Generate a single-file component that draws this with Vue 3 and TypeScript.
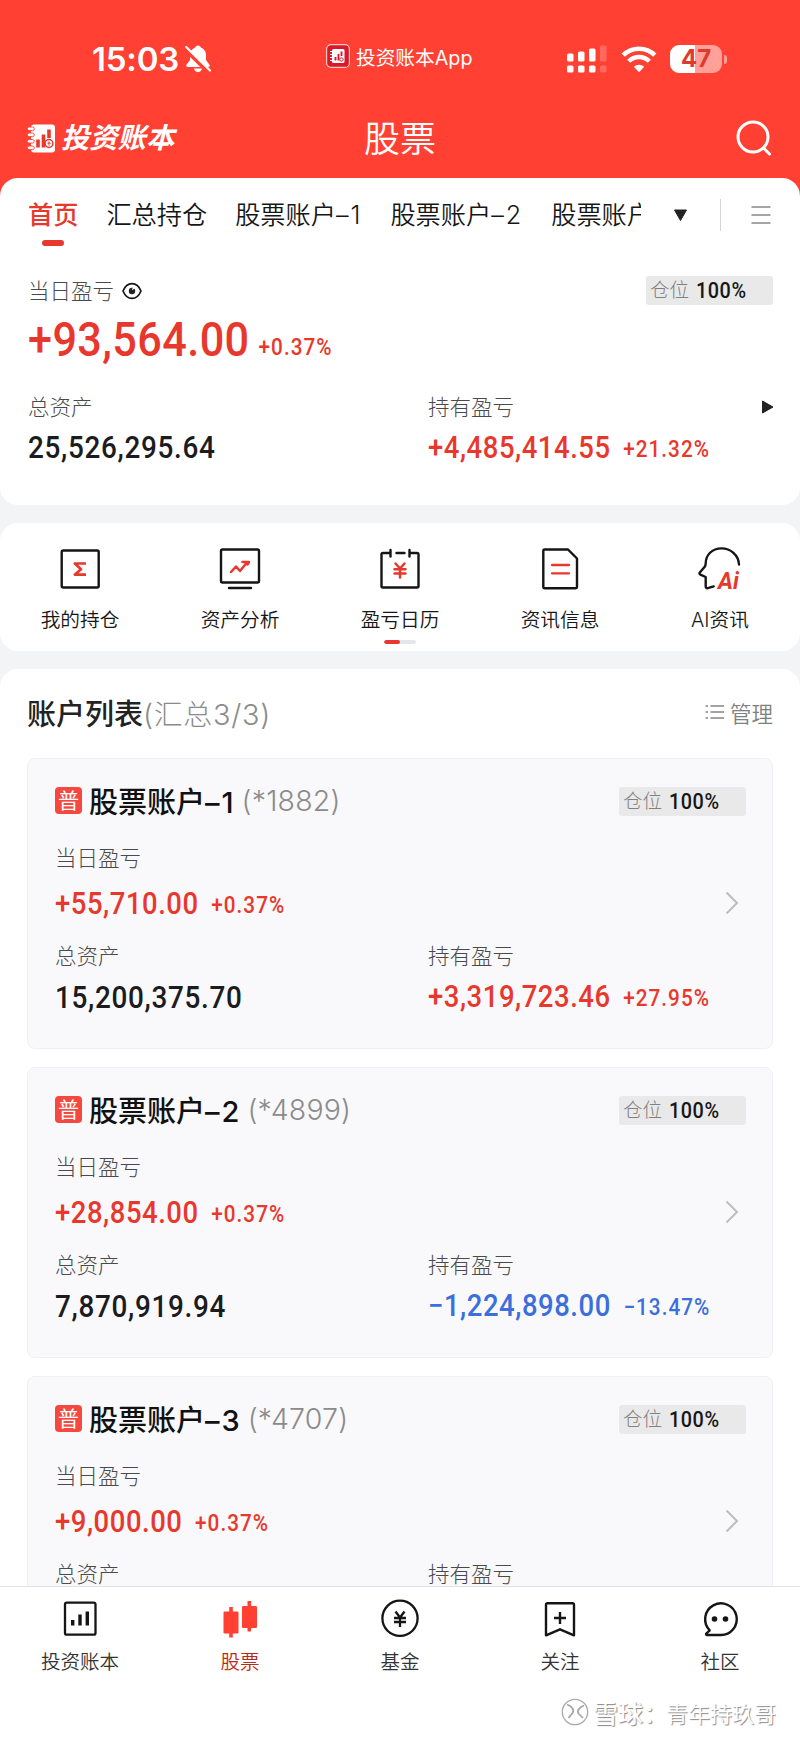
<script setup lang="ts">
interface Account {
  name: string
  no: string
  code: string
  day: string
  dayPct: string
  total: string
  hold: string
  holdPct: string
  down?: boolean
}

interface Tab {
  text: string
  no?: string
}

const tabs: Tab[] = [
  { text: '首页' },
  { text: '汇总持仓' },
  { text: '股票账户', no: '–1' },
  { text: '股票账户', no: '–2' },
  { text: '股票账户' },
]

const accounts: Account[] = [
  { name: '股票账户', no: '–1', code: '(*1882)', day: '+55,710.00', dayPct: '+0.37%', total: '15,200,375.70', hold: '+3,319,723.46', holdPct: '+27.95%' },
  { name: '股票账户', no: '–2', code: '(*4899)', day: '+28,854.00', dayPct: '+0.37%', total: '7,870,919.94', hold: '−1,224,898.00', holdPct: '−13.47%', down: true },
  { name: '股票账户', no: '–3', code: '(*4707)', day: '+9,000.00', dayPct: '+0.37%', total: '', hold: '', holdPct: '' },
]
</script>

<template>
  <div class="page">
    <main class="main">
      <header class="header">
        <div class="status">
          <div class="clock">
            <span class="time">15:03</span>
            <svg class="bell" width="26" height="28" viewBox="0 0 26 28">
              <path fill="#fff" d="M13 .5c-1.7 0-2.6 1-2.8 2.1C6.800 3.900 5 6.800 5 10v4.200c0 2.200-3.800 4.600-3.800 6.300 0 .9.6 1.400 1.600 1.400h20.400c1 0 1.600-.5 1.600-1.400 0-1.700-3.800-4.100-3.800-6.300V10c0-3.200-1.800-6.100-5.200-7.400C15.600 1.500 14.700.5 13 .5zM9 23.600h8c-.5 2.300-2 3.600-4 3.600s-3.500-1.300-4-3.600z" />
              <path d="M0 3.500 24 27" stroke="#ff4033" stroke-width="5" />
              <path d="M1.200 2 25 25.500" stroke="#fff" stroke-width="2.200" stroke-linecap="round" />
            </svg>
          </div>
          <div class="island">
            <svg width="24" height="24" viewBox="0 0 24 24">
              <rect x=".6" y=".6" width="22.800" height="22.800" rx="4.500" fill="#d9182b" stroke="#ffc7bf" stroke-width="1.200" />
              <rect x="6" y="5" width="12.500" height="14" rx="1.500" fill="#fff" />
              <path d="M4 7.500h4M4 10.500h4M4 13.500h4M4 16.500h4" stroke="#fff" stroke-width="1.200" />
              <path d="M9.500 16.500v-3.500M12.500 16.500V10M15.500 12V7.500" stroke="#d9182b" stroke-width="1.900" />
              <circle cx="15.500" cy="15.500" r="1.700" fill="#fff" stroke="#d9182b" />
            </svg>
            <span>投资账本App</span>
          </div>
          <div class="signals">
            <svg width="40" height="28" viewBox="0 0 40 28" fill="#fff">
              <rect x="0" y="8.500" width="6.500" height="8" rx="1.600" />
              <rect x="11" y="6.500" width="6.500" height="10" rx="1.600" />
              <rect x="22" y="3.500" width="6.500" height="13" rx="1.600" />
              <rect x="33" y=".5" width="6.500" height="16" rx="1.600" opacity=".22" />
              <rect x="0" y="20.500" width="6.500" height="7" rx="1.600" />
              <rect x="11" y="20.500" width="6.500" height="7" rx="1.600" />
              <rect x="22" y="20.500" width="6.500" height="7" rx="1.600" />
              <rect x="33" y="20.500" width="6.500" height="7" rx="1.600" opacity=".22" />
            </svg>
            <svg class="wifi" width="36" height="27" viewBox="0 0 36 27" fill="none" stroke="#fff">
              <path d="M2.200 9.200a22.400 22.400 0 0 1 31.600 0" stroke-width="4.600" />
              <path d="M7.700 15.200a14.600 14.600 0 0 1 20.600 0" stroke-width="4.400" />
              <path d="M18 26.200l-5.200-5.400a7.500 7.500 0 0 1 10.400 0z" fill="#fff" stroke="none" />
            </svg>
            <div class="battery"><span>47</span></div>
            <i class="nub"></i>
          </div>
        </div>
        <div class="titlebar">
          <div class="brand">
            <svg width="29" height="29" viewBox="0 0 29 29">
              <rect x="4" y=".5" width="24" height="28" rx="3" fill="#fff" />
              <g fill="#fff" stroke="#ff4033" stroke-width=".9">
                <rect x=".3" y="3" width="7" height="3.600" rx="1.800" />
                <rect x=".3" y="9" width="7" height="3.600" rx="1.800" />
                <rect x=".3" y="15.500" width="7" height="3.600" rx="1.800" />
                <rect x=".3" y="22" width="7" height="3.600" rx="1.800" />
              </g>
              <path d="M11 23.500v-8M16.500 23.500V10.500M22 14V5.500" stroke="#e8382d" stroke-width="3.600" />
              <circle cx="22" cy="19.500" r="3.900" fill="#fff" stroke="#e8382d" stroke-width="1.500" />
              <path d="M22 17.300v4.400M20.300 19.200h3.400" stroke="#e8382d" />
            </svg>
            <span>投资账本</span>
          </div>
          <h1>股票</h1>
          <svg class="search" width="36" height="36" viewBox="0 0 36 36" fill="none" stroke="#fff" stroke-width="3" stroke-linecap="round">
            <circle cx="17" cy="17" r="15" /><path d="M27.500 28l6 6" />
          </svg>
        </div>
      </header>

      <section class="card overview">
        <div class="tabs">
          <div class="tablist">
            <span v-for="(t, i) in tabs" :key="i" class="tab" :class="{ active: i === 0 }">{{ t.text }}<span v-if="t.no" class="no">{{ t.no }}</span></span>
          </div>
          <svg class="caret" width="15" height="13" viewBox="0 0 15 13"><path d="M1.500 1h12L7.500 11.500z" fill="#222" stroke="#222" stroke-linejoin="round" /></svg>
          <i class="rule"></i>
          <svg class="burger" width="20" height="20" viewBox="0 0 20 20" stroke="#888" stroke-width="1.700"><path d="M.5 2h19M.5 10h19M.5 18h19" /></svg>
        </div>
        <div class="line first">
          <span class="label">当日盈亏</span>
          <svg class="eye" width="20" height="18" viewBox="0 0 20 18" fill="none" stroke="#161616">
            <path d="M1 9C5-.8 15-.8 19 9 15 18.800 5 18.800 1 9z" stroke-width="1.700" />
            <circle cx="10" cy="9" r="3.200" fill="#222" stroke="none" /><path d="M10 7.500l2.500-1.500" stroke="#fff" stroke-width="1.300" />
          </svg>
          <span class="ratio"><em>仓位</em><b>100%</b></span>
        </div>
        <div class="amount hero up"><strong>+93,564.00</strong><small>+0.37%</small></div>
        <div class="pair">
          <div>
            <div class="label">总资产</div>
            <div class="amount total"><strong>25,526,295.64</strong></div>
          </div>
          <div>
            <div class="label">持有盈亏</div>
            <div class="amount up hold"><strong>+4,485,414.55</strong><small>+21.32%</small></div>
          </div>
          <svg class="play" width="13" height="16" viewBox="0 0 13 16"><path d="M1.500 2v12L12 8z" fill="#222" stroke="#222" stroke-linejoin="round" /></svg>
        </div>
      </section>

      <section class="card menu">
        <div class="cell">
          <svg width="48" height="48" viewBox="0 0 48 48" fill="none" stroke="#151515" stroke-width="2.400" stroke-linejoin="round">
            <rect x="5.700" y="5.500" width="37" height="37" rx="1.500" />
            <path d="M30 18.500H18.800l6.200 5.700-6.200 5.500H30" stroke="#e8382d" stroke-width="2.700" />
          </svg>
          <span>我的持仓</span>
        </div>
        <div class="cell">
          <svg width="48" height="48" viewBox="0 0 48 48" fill="none" stroke="#151515" stroke-width="2.400" stroke-linejoin="round" stroke-linecap="round">
            <rect x="5" y="4.500" width="38" height="33" rx="1.500" /><path d="M13 43h22" />
            <path d="M15 27l5-5.500 4 4.500 6.500-8M26.500 17h6.500l-1.500 2.500" stroke="#e8382d" stroke-width="2.500" />
          </svg>
          <span>资产分析</span>
        </div>
        <div class="cell">
          <svg width="48" height="48" viewBox="0 0 48 48" fill="none" stroke="#151515" stroke-width="2.400" stroke-linejoin="round" stroke-linecap="round">
            <path d="M14.500 8H7a1.500 1.500 0 0 0-1.500 1.500V41A1.500 1.500 0 0 0 7 42.500h34a1.500 1.500 0 0 0 1.500-1.500V9.500A1.500 1.500 0 0 0 41 8h-7M20.500 8h8M14.500 5v6.500M33.500 5v6.500" />
            <path d="M19.500 18.500L24 23.500l4.500-5M18.500 24.200h11M18.500 28.500h11M24 24v8.500" stroke="#e8382d" stroke-width="2.500" />
          </svg>
          <span>盈亏日历</span>
        </div>
        <div class="cell">
          <svg width="48" height="48" viewBox="0 0 48 48" fill="none" stroke="#151515" stroke-width="2.400" stroke-linejoin="round" stroke-linecap="round">
            <path d="M8.500 4.500H32l9 9V42a1.200 1.200 0 0 1-1.200 1.200H8.500A1.200 1.200 0 0 1 7.300 42V5.700A1.200 1.200 0 0 1 8.500 4.500z" />
            <path d="M16 20h17M16 28.300h17" stroke="#e8382d" stroke-width="2.300" />
          </svg>
          <span>资讯信息</span>
        </div>
        <div class="cell">
          <svg width="48" height="48" viewBox="0 0 48 48" fill="none" stroke="#151515" stroke-width="2.400" stroke-linejoin="round" stroke-linecap="round">
            <path d="M43 19.500C42.500 10 34.500 3.400 25.500 3.400 16 3.400 9.700 10 9.700 18.500c0 1.500-.4 2.300-1.200 3.500L3.800 27.500c-.6.8-.3 1.800.6 2.200l5.300 2.300v9.500c0 1.300.8 2 2 1.700l6-1.800" />
            <text x="22" y="43.500" class="ai">Ai</text>
          </svg>
          <span>AI资讯</span>
        </div>
        <div class="pager"><i></i></div>
      </section>

      <section class="card list">
        <div class="listhead">
          <h2>账户列表</h2><span class="count">(汇总3/3)</span>
          <div class="manage">
            <svg width="20" height="16" viewBox="0 0 20 16" stroke="#858585" stroke-width="1.500"><path d="M5.500 2H19M5.500 8H19M5.500 14H19M.5 2h2.500M.5 8h2.500M.5 14h2.500" /></svg>
            <span>管理</span>
          </div>
        </div>
        <article v-for="a in accounts" :key="a.code" class="account">
          <div class="who">
            <span class="kind">普</span><span class="name">{{ a.name }}<span class="no">{{ a.no }}</span></span><span class="code">{{ a.code }}</span>
            <span class="ratio"><em>仓位</em><b>100%</b></span>
          </div>
          <div class="label day">当日盈亏</div>
          <div class="dayrow">
            <div class="amount up"><strong>{{ a.day }}</strong><small>{{ a.dayPct }}</small></div>
            <svg class="chev" width="14" height="24" viewBox="0 0 14 24" fill="none" stroke="#bdbdc0" stroke-width="2"><path d="M1.500 1.500L12 12 1.500 22.500" /></svg>
          </div>
          <div class="pair">
            <div>
              <div class="label">总资产</div>
              <div class="amount total"><strong>{{ a.total }}</strong></div>
            </div>
            <div>
              <div class="label">持有盈亏</div>
              <div class="amount hold" :class="a.down ? 'down' : 'up'"><strong>{{ a.hold }}</strong><small>{{ a.holdPct }}</small></div>
            </div>
          </div>
        </article>
      </section>
    </main>

    <nav class="nav">
      <div class="item">
        <svg width="40" height="40" viewBox="0 0 40 40" fill="none" stroke="#151515" stroke-width="2.300">
          <rect x="5" y="3.700" width="30.500" height="32" rx="1.800" />
          <path d="M12.700 26.500v-5.500M20 26.500v-11M27.300 26.500V12.500" stroke-width="3.400" />
        </svg>
        <span>投资账本</span>
      </div>
      <div class="item on">
        <svg width="40" height="40" viewBox="0 0 40 40" fill="#ff4033">
          <rect x="3.500" y="12.500" width="15" height="22" rx="1.200" /><rect x="9.200" y="8" width="3.600" height="30.500" />
          <rect x="22" y="7" width="15" height="22" rx="1.200" /><rect x="27.500" y="2" width="3.600" height="30.500" />
        </svg>
        <span>股票</span>
      </div>
      <div class="item">
        <svg width="40" height="40" viewBox="0 0 40 40" fill="none" stroke="#151515" stroke-width="2.300">
          <circle cx="20" cy="19.300" r="17.600" />
          <path d="M15.500 12.500l4.500 6 4.500-6M14 19h12M14 23h12M20 18.500V28" />
        </svg>
        <span>基金</span>
      </div>
      <div class="item">
        <svg width="40" height="40" viewBox="0 0 40 40" fill="none" stroke="#151515" stroke-width="2.400" stroke-linejoin="round">
          <path d="M7.500 4.300h25a1.500 1.500 0 0 1 1.500 1.500v30.500l-14-6-14 6V5.800a1.500 1.500 0 0 1 1.500-1.500z" />
          <path d="M20 13v12M14 19h12" />
        </svg>
        <span>关注</span>
      </div>
      <div class="item">
        <svg width="40" height="40" viewBox="0 0 40 40" fill="none" stroke="#151515" stroke-width="2.400" stroke-linejoin="round">
          <path d="M20.300 36H6.800c-.8 0-1-1-.4-1.500l3.300-3.200A15.800 15.800 0 1 1 20.300 36z" />
          <circle cx="14.500" cy="20" r="2.800" fill="#151515" stroke="none" /><circle cx="25.500" cy="20" r="2.800" fill="#151515" stroke="none" />
        </svg>
        <span>社区</span>
      </div>
      <div class="mark">
        <svg width="30" height="30" viewBox="0 0 30 30" fill="none">
          <circle cx="15" cy="15" r="12.700" stroke="#aaa" stroke-width="1.300" />
          <path d="M7 7.500c5 2 7.500 5 5.500 8.500L8.500 21M24 8.500c-4.500 2-7.500 5-5.500 8l4.500 4.500" stroke="#a5a5a5" stroke-width="1.700" />
        </svg>
        <b>雪球：</b><span>青年持玖哥</span>
      </div>
    </nav>
  </div>
</template>

<style>
body { margin: 0; background: #fff; }
</style>

<style scoped>
* { box-sizing: border-box; }
.page {
  width: 800px; height: 1738px; overflow: hidden; display: flex; flex-direction: column;
  background: #f3f4f6; color: #1c1c1e; white-space: nowrap;
  font-family: Inter, "Noto Sans CJK SC", sans-serif; font-weight: 350;
}
svg { display: block; flex: none; }
.main { flex: 1; min-height: 0; overflow: hidden; }
.header { background: #ff4033; height: 196px; color: #fff; }
.status { display: flex; height: 98px; padding-top: 20px; align-items: center; }
.clock { display: flex; align-items: center; width: 326px; padding-left: 92px; }
.time { font-size: 33px; font-weight: 600; letter-spacing: -.2px; }
.bell { margin-left: 6px; }
.island { display: flex; align-items: center; gap: 6px; width: 242px; font-size: 19.700px; font-weight: 400; position: relative; top: -3px; }
.signals { display: flex; align-items: center; margin-left: -1px; }
.wifi { margin: 0 13px 0 14px; }
.battery { width: 52px; height: 28px; border-radius: 9px; background: linear-gradient(90deg, #fff 48%, #ffa099 48%); color: #e03a2f; font: 700 24px/28px Inter, sans-serif; text-align: center; }
.nub { width: 3px; height: 9px; margin-left: 2px; border-radius: 0 3px 3px 0; background: #ffa099; }
.titlebar { display: flex; align-items: center; height: 80px; padding: 0 28px 0 27px; }
.brand { display: flex; align-items: center; width: 337px; gap: 5px; }
.brand span { font-size: 28.300px; font-weight: 700; font-style: italic; line-height: 40px; }
h1 { margin: 1px 0 0; flex: 1; font-size: 36px; font-weight: 350; line-height: 44px; }
.card { background: #fff; border-radius: 18px; }
.overview { height: 327px; margin-top: -18px; padding: 0 27px 0 28px; }
.tabs { height: 74px; display: flex; align-items: center; }
.tablist { display: flex; gap: 28px; width: 613px; overflow: hidden; font-size: 25.200px; height: 74px; line-height: 74px; color: #161616; }
.tab { flex: none; }
.no { letter-spacing: 2px; }
.tab.active { color: #e8382d; font-weight: 500; position: relative; }
.tab.active::after { content: ""; position: absolute; left: 14px; top: 62px; width: 22px; height: 6px; border-radius: 3px; background: #e8382d; }
.caret { margin-left: 32px; }
.rule { width: 1px; height: 32px; margin: 0 30px 0 32px; background: #d4d4d6; }
.line { display: flex; align-items: center; height: 30px; }
.line.first { margin-top: 24px; }
.label { font-size: 21.500px; line-height: 30px; color: #4a4a4c; font-weight: 300; }
.eye { margin-left: 8px; }
.ratio { margin-left: auto; width: 127px; height: 29px; border-radius: 3px; background: #e9e9e9; padding-left: 4px; display: flex; align-items: center; gap: 7px; line-height: 29px; }
.ratio em { font-style: normal; font-size: 19.500px; color: #808080; font-weight: 300; }
.ratio b { font: 500 22px/29px Roboto, sans-serif; letter-spacing: .6px; color: #161616; transform: scaleX(.9); transform-origin: left; }
.line .ratio { margin-top: -1px; }
.amount { display: flex; align-items: baseline; font-family: Roboto, sans-serif; line-height: 40px; height: 40px; transform: scaleX(.9); transform-origin: left; }
.amount strong { font-size: 30.500px; font-weight: 500; letter-spacing: .6px; }
.amount small { font-size: 23px; font-weight: 500; letter-spacing: 1.150px; margin-left: 14px; position: relative; top: -1px; }
.total strong { font-size: 31px; letter-spacing: .75px; }
.up { color: #e8382d; }
.down { color: #3b6fdc; }
.hero { height: 60px; line-height: 60px; margin-top: 4px; }
.hero strong { font-size: 48px; letter-spacing: .45px; }
.hero small { margin-left: 10px; }
.pair { display: flex; position: relative; }
.overview .pair { margin-top: 22px; }
.pair > div { width: 400px; flex: none; }
.overview .pair > div:nth-child(2) { width: 333px; }
.overview .pair .amount { margin-top: 6px; }
.play { margin-top: 7px; }
.menu { margin-top: 18px; height: 128px; display: flex; position: relative; }
.cell { width: 160px; display: flex; flex-direction: column; align-items: center; padding-top: 22px; }
.cell span { font-size: 19.700px; line-height: 28px; margin-top: 13px; color: #161616; }
.ai { font: italic 700 23px Roboto, sans-serif; fill: #e8382d; stroke: none; }
.pager { position: absolute; left: 384px; top: 117px; width: 32px; height: 4px; border-radius: 2px; background: #e5e6ea; overflow: hidden; }
.pager i { display: block; width: 16px; height: 4px; background: #e8382d; border-radius: 2px; }
.list { margin-top: 18px; padding: 0 27px; }
.listhead { height: 89px; display: flex; align-items: center; padding-bottom: 3px; }
h2 { margin: 0; font-size: 29px; font-weight: 500; color: #222; }
.count { color: #8b8b8b; font-weight: 300; font-size: 28.900px; letter-spacing: .7px; }
.manage { margin-left: auto; display: flex; align-items: center; gap: 5px; font-size: 21.500px; color: #808080; }
.account { height: 291px; margin-bottom: 18px; border: 1px solid #f0f0f3; border-radius: 8px; background: #f9f9fb; padding: 28px 26px 0 27px; }
.who { height: 29px; display: flex; align-items: center; }
.kind { width: 27px; height: 27px; margin-bottom: 2px; border-radius: 4px; background: #f5483f; color: #fff; font-size: 21px; line-height: 27px; text-align: center; font-weight: 400; }
.name { margin: 0 0 4px 7px; font-size: 29px; font-weight: 500; color: #111; }
.code { margin: 0 0 2px 6px; font-size: 28.500px; font-weight: 300; color: #8b8b8b; letter-spacing: .2px; }
.day { margin-top: 27px; }
.dayrow { margin-top: 11px; display: flex; justify-content: space-between; align-items: center; height: 40px; }
.chev { margin-right: 7px; margin-bottom: 2px; }
.account .pair { margin-top: 17px; }
.account .pair > div:first-child { width: 373px; }
.account .pair .amount { margin-top: 7px; }
.account .pair .hold { margin-top: 6px; }
.nav { height: 152px; flex: none; position: relative; display: flex; background: #fff; border-top: 1px solid #e2e2e4; }
.item { width: 160px; display: flex; flex-direction: column; align-items: center; padding-top: 12px; font-size: 19.500px; color: #333; }
.item span { line-height: 28px; margin-top: 9px; }
.item.on { color: #b92b18; }
.mark { position: absolute; left: 560px; top: 109px; display: flex; align-items: center; height: 32px; color: #fff; text-shadow: 1px 1px 1px #888; font-size: 22px; }
.mark b { font-size: 25px; font-weight: 500; margin-left: 3px; width: 73px; }
</style>
